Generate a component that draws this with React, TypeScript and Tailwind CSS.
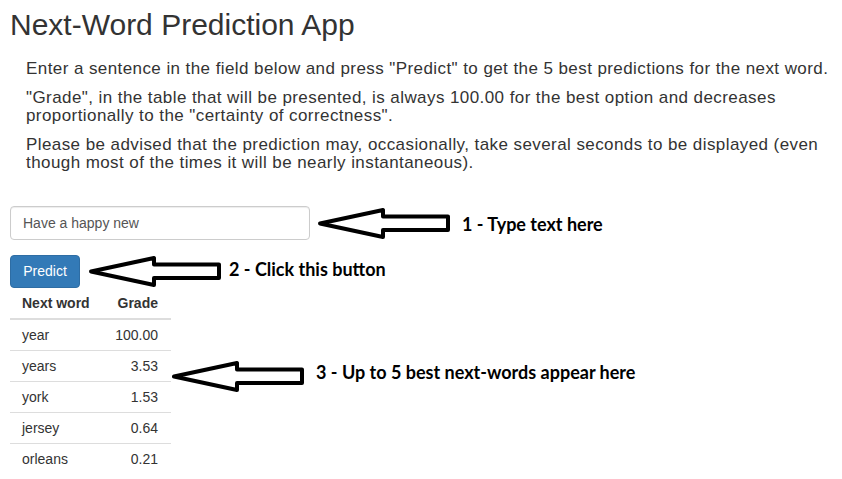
import React from "react";

function Arrow() {
  return (
    <svg width="137" height="37" viewBox="0 0 137 37" className="block shrink-0">
      <polygon
        points="4,18.5 67,5 67,11.5 132,11.5 132,25 67,25 67,32"
        fill="#ffffff"
        stroke="#000000"
        strokeWidth="4"
        strokeLinejoin="round"
      />
    </svg>
  );
}

const rows: [string, string][] = [
  ["year", "100.00"],
  ["years", "3.53"],
  ["york", "1.53"],
  ["jersey", "0.64"],
  ["orleans", "0.21"],
];

export default function App() {
  return (
    <div
      className="w-[842px] h-[479px] overflow-hidden bg-white text-[#333333] pl-[10px] pt-[8px]"
      style={{ fontFamily: '"Liberation Sans", Arial, sans-serif' }}
    >
      <h1 className="text-[30px] leading-[33px] font-normal">Next-Word Prediction App</h1>

      <div className="ml-[16px] mt-[19px] w-[816px] text-[17px] leading-[18px] tracking-[0.42px] flex flex-col gap-[11px]">
        <p>Enter a sentence in the field below and press "Predict" to get the 5 best predictions for the next word.</p>
        <p>
          "Grade", in the table that will be presented, is always 100.00 for the best option and decreases proportionally to the "certainty of correctness".
        </p>
        <p>
          Please be advised that the prediction may, occasionally, take several seconds to be displayed (even though most of the times it will be nearly instantaneous).
        </p>
      </div>

      <div className="mt-[34px] h-[34px] flex items-center">
        <div className="w-[300px] h-[34px] shrink-0 border border-[#cccccc] rounded-[4px] flex items-center px-[12px] text-[14px] text-[#555555] shadow-[inset_0_1px_1px_rgba(0,0,0,0.075)]">
          Have a happy new
        </div>
        <div className="ml-[6px]">
          <Arrow />
        </div>
        <span
          className="ml-[9px] mt-[2px] text-[18px] font-bold text-black"
          style={{ fontFamily: "Lato, sans-serif" }}
        >
          1 - Type text here
        </span>
      </div>

      <div className="mt-[15px] h-[33px] flex items-center">
        <div className="w-[70px] h-[33px] shrink-0 bg-[#337ab7] border border-[#2e6da4] rounded-[4px] flex items-center justify-center text-[14px] text-white">
          Predict
        </div>
        <div className="ml-[7px]">
          <Arrow />
        </div>
        <span
          className="ml-[5px] mb-[4px] text-[18px] font-bold text-black"
          style={{ fontFamily: "Lato, sans-serif" }}
        >
          2 - Click this button
        </span>
      </div>

      <div className="flex items-start">
        <div className="w-[161px] text-[14px]">
          <div className="h-[32px] flex items-center border-b-2 border-[#dddddd] font-bold">
            <div className="w-[91px] pl-[12px]">Next word</div>
            <div className="w-[70px] pr-[13px] text-right">Grade</div>
          </div>
          {rows.map(([w, g], i) => (
            <div
              key={w}
              className={
                i === 0
                  ? "h-[30px] flex items-center"
                  : "h-[31px] flex items-center border-t border-[#dddddd]"
              }
            >
              <div className="w-[91px] pl-[12px]">{w}</div>
              <div className="w-[70px] pr-[13px] text-right">{g}</div>
            </div>
          ))}
        </div>
        <div className="-ml-[1px] mt-[70px] flex items-center">
          <Arrow />
          <span
            className="ml-[9px] mb-[8px] text-[18px] font-bold text-black"
            style={{ fontFamily: "Lato, sans-serif" }}
          >
            3 - Up to 5 best next-words appear here
          </span>
        </div>
      </div>
    </div>
  );
}
